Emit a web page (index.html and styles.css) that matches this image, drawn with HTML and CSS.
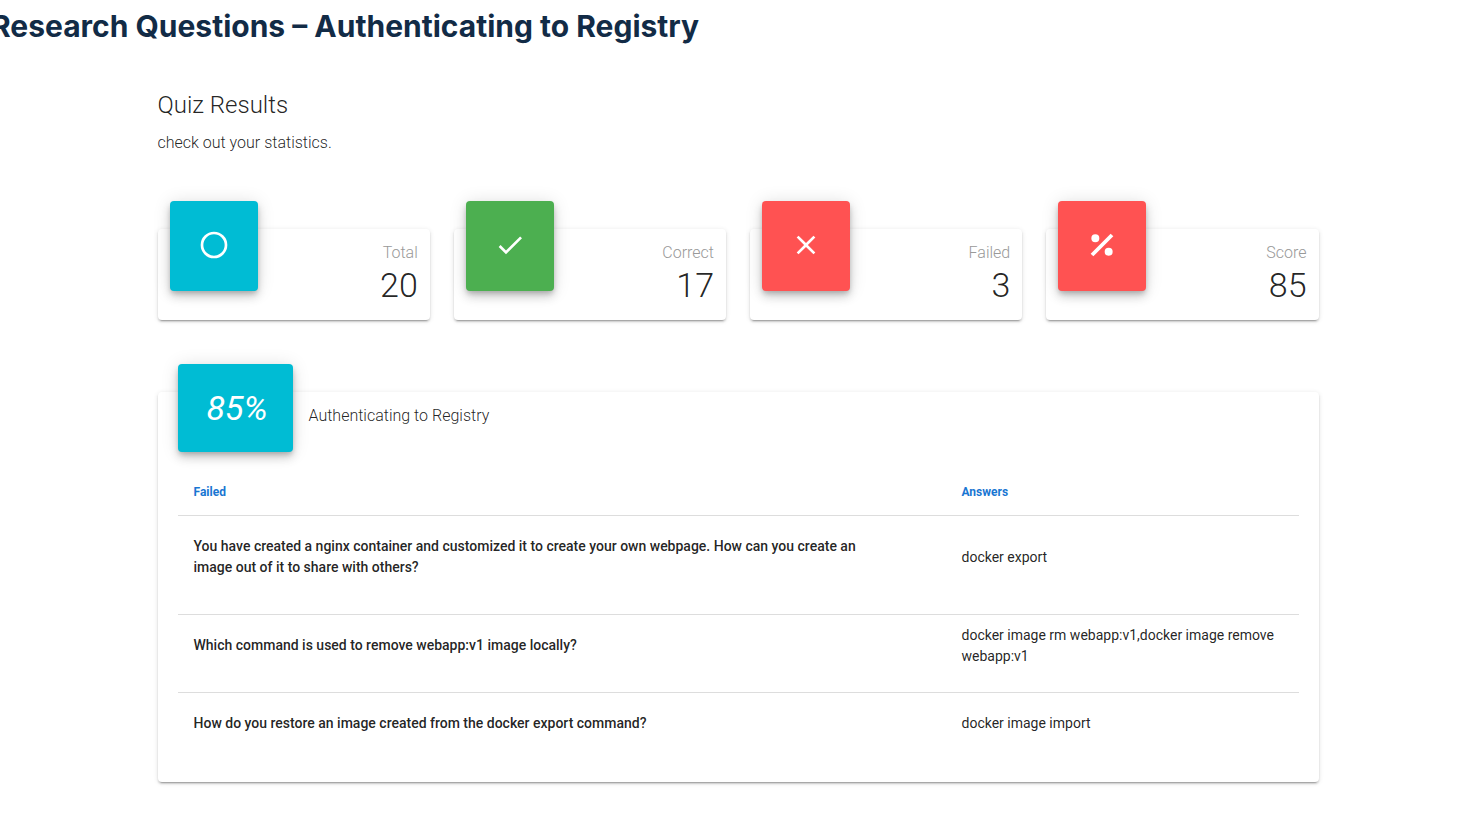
FILE: index.html
```html
<!DOCTYPE html>
<html lang="en">
<head>
<meta charset="utf-8">
<title>Quiz Results</title>
<link rel="stylesheet" href="styles.css">
</head>
<body>
<h1 class="page-title">Research Questions – Authenticating to Registry</h1>
<main class="container">
  <header class="intro">
    <h2 class="intro-title">Quiz Results</h2>
    <p class="intro-text">check out your statistics.</p>
  </header>
  <section class="stats">
    <article class="card stat">
      <div class="tile tile-cyan"><svg class="icon" viewBox="0 0 24 24"><path d="M12 20a8 8 0 0 1-8-8 8 8 0 0 1 8-8 8 8 0 0 1 8 8 8 8 0 0 1-8 8m0-18A10 10 0 0 0 2 12a10 10 0 0 0 10 10 10 10 0 0 0 10-10A10 10 0 0 0 12 2z"/></svg></div>
      <div class="stat-body"><div class="stat-label">Total</div><div class="stat-value">20</div></div>
    </article>
    <article class="card stat">
      <div class="tile tile-green"><svg class="icon" viewBox="0 0 24 24"><path d="M21 7L9 19l-5.500-5.500 1.410-1.410L9 16.170 19.590 5.590 21 7z"/></svg></div>
      <div class="stat-body"><div class="stat-label">Correct</div><div class="stat-value">17</div></div>
    </article>
    <article class="card stat">
      <div class="tile tile-red"><svg class="icon" viewBox="0 0 24 24"><path d="M19 6.410L17.590 5 12 10.590 6.410 5 5 6.410 10.590 12 5 17.590 6.410 19 12 13.410 17.590 19 19 17.590 13.410 12 19 6.410z"/></svg></div>
      <div class="stat-body"><div class="stat-label">Failed</div><div class="stat-value">3</div></div>
    </article>
    <article class="card stat">
      <div class="tile tile-red"><svg class="icon" viewBox="0 0 24 24"><path d="M18.500 3.500l2 2-15 15-2-2 15-15M7 4a3 3 0 0 1 3 3 3 3 0 0 1-3 3 3 3 0 0 1-3-3 3 3 0 0 1 3-3m10 10a3 3 0 0 1 3 3 3 3 0 0 1-3 3 3 3 0 0 1-3-3 3 3 0 0 1 3-3z"/></svg></div>
      <div class="stat-body"><div class="stat-label">Score</div><div class="stat-value">85</div></div>
    </article>
  </section>
  <section class="card results">
    <div class="results-head">
      <div class="tile tile-cyan tile-score"><em>85%</em></div>
      <h3 class="results-title">Authenticating to Registry</h3>
    </div>
    <table class="answers">
      <thead><tr><th class="col-question" scope="col">Failed</th><th scope="col">Answers</th></tr></thead>
      <tbody>
        <tr><td><p class="question">You have created a nginx container and customized it to create your own webpage. How can you create an image out of it to share with others?</p></td><td class="answer">docker export</td></tr>
        <tr><td><p class="question">Which command is used to remove webapp:v1 image locally?</p></td><td class="answer">docker image rm webapp:v1,docker image remove webapp:v1</td></tr>
        <tr><td><p class="question">How do you restore an image created from the docker export command?</p></td><td class="answer">docker image import</td></tr>
      </tbody>
    </table>
  </section>
</main>
</body>
</html>
```
FILE: styles.css
```css
* { box-sizing: border-box; }
body {
  margin: 0;
  padding: 6px 0 48px 17px;
  background: #fff;
  color: rgba(0, 0, 0, 0.87);
  font-family: Roboto, sans-serif;
}
h1, h2, h3, p { margin: 0; }
.page-title {
  margin-left: -26px;
  color: #122b46;
  font: 700 30px/40px Inter, sans-serif;
}
.container {
  max-width: 1185px;
  margin: 0 auto;
  padding: 43px 12px 0;
}
.intro-title { font-size: 24px; line-height: 32px; font-weight: 300; }
.intro-text { margin-top: 10px; font-size: 16px; line-height: 24px; font-weight: 300; }
.stats {
  display: grid;
  grid-template-columns: repeat(4, 1fr);
  gap: 24px;
  margin-top: 74px;
}
.card {
  border-radius: 4px;
  background: #fff;
  box-shadow: 0 3px 1px -2px rgba(0, 0, 0, 0.2), 0 2px 2px 0 rgba(0, 0, 0, 0.14), 0 1px 5px 0 rgba(0, 0, 0, 0.12);
}
.stat { display: flex; justify-content: space-between; height: 91px; padding: 0 12px; }
.tile {
  display: flex;
  align-items: center;
  justify-content: center;
  width: 88px;
  height: 90px;
  margin-top: -28px;
  padding-bottom: 2px;
  border-radius: 4px;
  color: #fff;
  box-shadow: 0 3px 5px -1px rgba(0, 0, 0, 0.2), 0 6px 10px 0 rgba(0, 0, 0, 0.14), 0 1px 18px 0 rgba(0, 0, 0, 0.12);
}
.tile-cyan { background: #00bcd4; }
.tile-green { background: #4caf50; }
.tile-red { background: #ff5252; }
.icon { width: 32px; height: 32px; fill: currentColor; }
.stat-body { padding-top: 12px; text-align: right; }
.stat-label { color: #999; font-size: 16px; line-height: 24px; font-weight: 300; }
.stat-value { font-size: 34px; line-height: 40px; font-weight: 300; }
.results { margin-top: 72px; padding: 0 20px 12px; }
.results-head { display: flex; }
.tile-score { width: 115px; height: 88px; padding: 0 0 0 4px; font-size: 34px; }
.results-title { margin: 12px 0 0 16px; font-size: 16px; line-height: 24px; font-weight: 300; }
.answers { width: 100%; margin-top: 19px; border-collapse: collapse; font-size: 14px; line-height: 21px; }
.answers th { height: 44px; padding: 0 16px; color: #1976d2; font-size: 12px; font-weight: 700; text-align: left; }
.answers td { padding: 10px 16px; border-top: 1px solid #ddd; }
.answers .answer { padding-bottom: 25px; }
.col-question { width: 768px; }
.question { max-width: 690px; padding: 10px 0 26px; font-weight: 500; }
```
